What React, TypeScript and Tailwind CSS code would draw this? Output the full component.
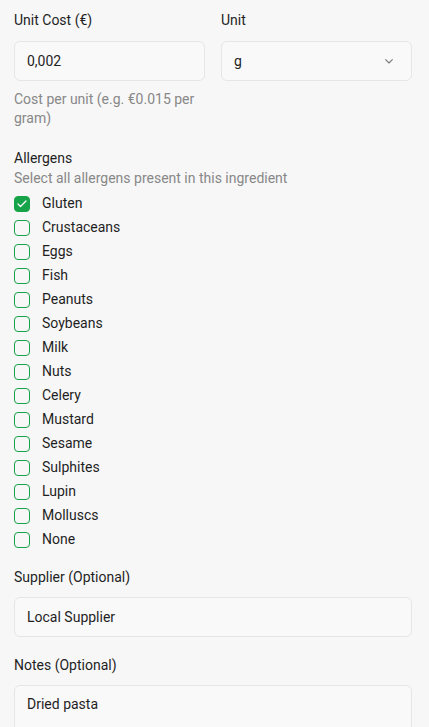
import { useState } from "react";

const ALLERGENS = [
  "Gluten",
  "Crustaceans",
  "Eggs",
  "Fish",
  "Peanuts",
  "Soybeans",
  "Milk",
  "Nuts",
  "Celery",
  "Mustard",
  "Sesame",
  "Sulphites",
  "Lupin",
  "Molluscs",
  "None",
];

const inputCls =
  "w-full h-10 px-3 bg-[#f9f9f9] border border-[#e6e6e6] rounded-md text-[14px] text-[#1f1f1f] outline-none";

const App = () => {
  const [selected, setSelected] = useState<string[]>(["Gluten"]);

  const toggle = (name: string) => {
    setSelected((s) => (s.includes(name) ? s.filter((x) => x !== name) : [...s, name]));
  };

  return (
    <div
      className="min-h-screen bg-[#f7f7f7] pl-[14px] pr-[17px] pt-[10px] text-[14px] text-[#1f1f1f]"
      style={{ fontFamily: "Roboto, sans-serif" }}
    >
      <div className="grid grid-cols-2 gap-4">
        <div>
          <label className="block leading-5 mb-[11px]">Unit Cost (€)</label>
          <input type="text" defaultValue="0,002" className={inputCls} />
          <p className="mt-[9px] leading-[19px] text-[#888888]">Cost per unit (e.g. €0.015 per gram)</p>
        </div>
        <div>
          <label className="block leading-5 mb-[11px]">Unit</label>
          <div className={inputCls + " flex items-center justify-between"}>
            <span>g</span>
            <svg width="16" height="16" viewBox="0 0 24 24" fill="none" stroke="#777" strokeWidth="1.6" strokeLinecap="round" strokeLinejoin="round" className="mr-[2px]">
              <path d="m7 10 5 5 5-5" />
            </svg>
          </div>
        </div>
      </div>

      <div className="mt-5">
        <div className="leading-5">Allergens</div>
        <div className="leading-5 text-[#888888]">Select all allergens present in this ingredient</div>
        <div className="mt-[3px]">
          {ALLERGENS.map((a) => {
            const on = selected.includes(a);
            return (
              <label key={a} className="flex items-center h-6 cursor-pointer" onClick={() => toggle(a)}>
                <span
                  className={
                    "w-4 h-4 rounded-[4px] border flex items-center justify-center mt-[2px] " +
                    (on ? "bg-[#16a34a] border-[#16a34a]" : "border-[#16a34a] bg-transparent")
                  }
                >
                  {on && (
                    <svg width="12" height="12" viewBox="0 0 24 24" fill="none" stroke="white" strokeWidth="2.5" strokeLinecap="round" strokeLinejoin="round">
                      <path d="M20 6 9 17l-5-5" />
                    </svg>
                  )}
                </span>
                <span className="ml-3">{a}</span>
              </label>
            );
          })}
        </div>
      </div>

      <div className="mt-4">
        <label className="block leading-5 mb-[10px]">Supplier (Optional)</label>
        <input type="text" defaultValue="Local Supplier" className={inputCls} />
      </div>

      <div className="mt-[18px]">
        <label className="block leading-5 mb-[10px]">Notes (Optional)</label>
        <textarea
          defaultValue="Dried pasta"
          rows={3}
          className="w-full px-3 py-2 bg-[#f9f9f9] border border-[#e6e6e6] rounded-md text-[14px] text-[#1f1f1f] outline-none resize-none"
        />
      </div>
    </div>
  );
};

export default App;
